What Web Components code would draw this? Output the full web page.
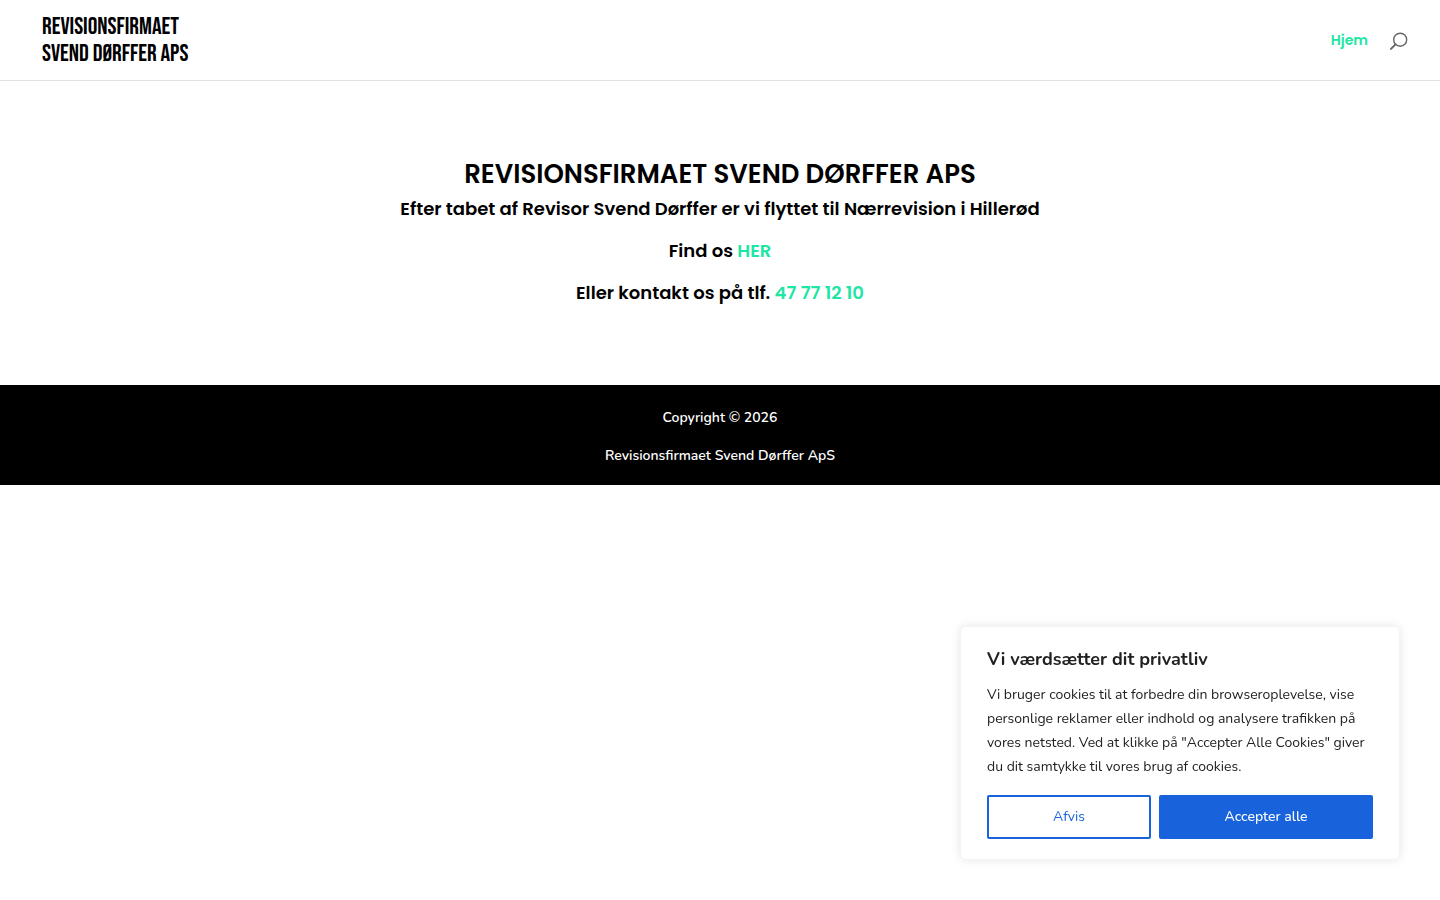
<!DOCTYPE html>
<html lang="da">
<head>
<meta charset="utf-8">
<meta name="viewport" content="width=device-width, initial-scale=1">
<title>Revisionsfirmaet Svend Dørffer ApS</title>
<style>
body {
  margin: 0;
  background: #fff;
  color: #000;
  --accent: #1fe5a5;
  --heading-font: Poppins, Inter, sans-serif;
  --body-font: Nunito, "Open Sans", sans-serif;
  font: 600 14px/24px var(--body-font);
}
</style>
</head>
<body>
<site-header>
  <site-logo slot="logo"></site-logo>
  <nav-link href="#" slot="nav">Hjem</nav-link>
  <search-button slot="search"></search-button>
</site-header>
<main-notice></main-notice>
<site-footer>
  <span slot="copyright">Copyright © 2026</span>
  <span slot="company">Revisionsfirmaet Svend Dørffer ApS</span>
</site-footer>
<cookie-consent>
  <span slot="title">Vi værdsætter dit privatliv</span>
  <span slot="text">Vi bruger cookies til at forbedre din browseroplevelse, vise personlige reklamer eller indhold og analysere trafikken på vores netsted. Ved at klikke på "Accepter Alle Cookies" giver du dit samtykke til vores brug af cookies.</span>
</cookie-consent>
<script>
class BaseElement extends HTMLElement {
  constructor() {
    super();
    this.attachShadow({ mode: "open" }).innerHTML = this.constructor.markup;
  }
}

class SiteHeader extends BaseElement {
  static markup = `
    <style>
      :host { display: block; }
      header { display: flex; align-items: center; justify-content: space-between; height: 80px; padding: 0 32px 0 42px; border-bottom: 1px solid #e2e2e2; }
      nav { display: flex; align-items: center; gap: 22px; }
    </style>
    <header><slot name="logo"></slot><nav aria-label="Hovedmenu"><slot name="nav"></slot><slot name="search"></slot></nav></header>`;
}

class SiteLogo extends BaseElement {
  static markup = `
    <style>
      :host { display: block; }
      a { display: block; color: #000; text-decoration: none; font: 400 24px/27px "Bebas Neue", "Liberation Sans Narrow", "Roboto Condensed", Roboto, sans-serif; white-space: nowrap; }
      span { display: block; }
    </style>
    <a href="#"><span>REVISIONSFIRMAET</span><span>SVEND DØRFFER APS</span></a>`;
}

class NavLink extends BaseElement {
  static markup = `
    <style>
      :host { display: block; }
      a { color: var(--accent); text-decoration: none; font: 600 14px/24px var(--heading-font); }
    </style>
    <a href="#"><slot></slot></a>`;
  connectedCallback() {
    this.shadowRoot.querySelector("a").href = this.getAttribute("href") || "#";
  }
}

class SearchButton extends BaseElement {
  static markup = `
    <style>
      :host { display: block; }
      button { display: block; padding: 2px 0 0; border: 0; background: none; cursor: pointer; }
      svg { display: block; }
    </style>
    <button type="button" aria-label="Søg">
      <svg width="18" height="18" viewBox="0 0 18 18" fill="none" stroke="#666" aria-hidden="true">
        <circle cx="10.2" cy="7.7" r="6.5" stroke-width="1.4"/>
        <path d="M5.5 12.4L1 16.9" stroke-width="2" stroke-linecap="round"/>
      </svg>
    </button>`;
}

class MainNotice extends BaseElement {
  static markup = `
    <style>
      :host { display: block; }
      main { padding: 80px 24px 83px; text-align: center; font: 600 18px/18px var(--heading-font); }
      h1 { margin: 0 0 13px; font-size: 26px; line-height: 26px; font-weight: 600; }
      h2 { margin: 0; font-size: 18px; line-height: 18px; font-weight: 600; }
      h2 + h2 { margin-top: 24px; }
      a { color: var(--accent); text-decoration: none; }
    </style>
    <main>
      <h1>REVISIONSFIRMAET SVEND DØRFFER APS</h1>
      <h2>Efter tabet af Revisor Svend Dørffer er vi flyttet til Nærrevision i Hillerød</h2>
      <h2>Find os <a href="#">HER</a></h2>
      <h2>Eller kontakt os på tlf. <a href="tel:47771210">47 77 12 10</a></h2>
    </main>`;
}

class SiteFooter extends BaseElement {
  static markup = `
    <style>
      :host { display: block; }
      footer { padding: 21px 24px 17px; background: #000; color: #fff; text-align: center; }
      p { margin: 0; }
      p + p { margin-top: 14px; }
    </style>
    <footer><p><slot name="copyright"></slot></p><p><slot name="company"></slot></p></footer>`;
}

class CookieConsent extends BaseElement {
  static markup = `
    <style>
      :host { position: fixed; right: 40px; bottom: 40px; width: 440px; max-width: calc(100% - 80px); font-weight: 400; color: #212121; }
      section { padding: 20px 26px; border: 1px solid #f4f4f4; border-radius: 6px; background: #fff; box-shadow: 0 0 10px #acabab4d; }
      h2 { margin: 0 0 12px; font-size: 18px; line-height: 24px; font-weight: 700; }
      p { margin: 0 0 16px; }
      .actions { display: grid; grid-template-columns: 164fr 214fr; gap: 8px; }
      button { height: 44px; border: 2px solid #1863dc; border-radius: 2px; background: transparent; color: #1863dc; font: inherit; cursor: pointer; }
      button.primary { background: #1863dc; color: #fff; font-weight: 500; }
    </style>
    <section role="dialog" aria-labelledby="title">
      <h2 id="title"><slot name="title"></slot></h2>
      <p><slot name="text"></slot></p>
      <div class="actions"><button type="button">Afvis</button><button type="button" class="primary">Accepter alle</button></div>
    </section>`;
}

customElements.define("site-header", SiteHeader);
customElements.define("site-logo", SiteLogo);
customElements.define("nav-link", NavLink);
customElements.define("search-button", SearchButton);
customElements.define("main-notice", MainNotice);
customElements.define("site-footer", SiteFooter);
customElements.define("cookie-consent", CookieConsent);
</script>
</body>
</html>
